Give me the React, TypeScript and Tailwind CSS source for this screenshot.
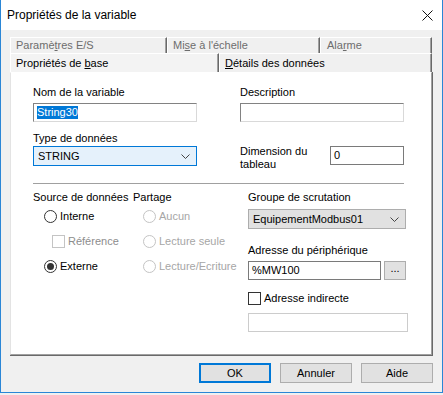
import React from "react";

function Radio({ checked = false, disabled = false }: { checked?: boolean; disabled?: boolean }) {
  return (
    <span
      className={`flex h-[13px] w-[13px] shrink-0 items-center justify-center rounded-full border bg-white ${
        disabled ? "border-[#c4c4c4]" : "border-[#333333]"
      }`}
    >
      {checked && <span className="h-[7px] w-[7px] rounded-full bg-[#333333]" />}
    </span>
  );
}

function Check({ disabled = false }: { disabled?: boolean }) {
  return (
    <span
      className={`h-[13px] w-[13px] shrink-0 border bg-white ${
        disabled ? "border-[#c4c4c4]" : "border-[#333333]"
      }`}
    />
  );
}

function Chevron() {
  return (
    <svg width="9" height="5" viewBox="0 0 9 5" className="shrink-0">
      <path d="M0.5 0.5 L4.5 4.5 L8.5 0.5" fill="none" stroke="#444" strokeWidth="1" />
    </svg>
  );
}

export default function App() {
  return (
    <div className="h-[395px] w-[443px] bg-[#f0f0f0] font-['Liberation_Sans',Arial,sans-serif] text-[11px] leading-[13px] text-black">
      <div className="flex h-[393px] w-[443px] flex-col border-x border-b border-[#2a86d6] bg-[#f0f0f0]">
        {/* Title bar */}
        <div className="flex h-[30px] shrink-0 items-center justify-between bg-white pl-[6px] pr-[9px]">
          <span className="text-[12px]">Propriétés de la variable</span>
          <svg width="11" height="11" viewBox="0 0 11 11">
            <path d="M0.5 0.5 L10.5 10.5 M10.5 0.5 L0.5 10.5" stroke="#111" strokeWidth="1" />
          </svg>
        </div>

        <div className="flex flex-col px-[9px] pt-[7px]">
          {/* Back tab row */}
          <div className="flex h-[16px] w-[422px] text-[#6d6d6d]">
            <div className="flex w-[157px] items-center border-l border-t border-l-white border-t-white border-r border-r-[#696969] pl-[5px] shadow-[inset_-1px_0_0_#a0a0a0]">
              <span>
                Paramè<span className="underline">t</span>res E/S
              </span>
            </div>
            <div className="flex w-[153px] items-center border-l border-t border-l-white border-t-white border-r border-r-[#696969] pl-[5px] shadow-[inset_-1px_0_0_#a0a0a0]">
              <span>
                Mi<span className="underline">s</span>e à l'échelle
              </span>
            </div>
            <div className="flex w-[112px] items-center border-l border-t border-l-white border-t-white border-r border-r-[#696969] pl-[6px] shadow-[inset_-1px_0_0_#a0a0a0]">
              <span>
                Ala<span className="underline">r</span>me
              </span>
            </div>
          </div>
          {/* Front tab row */}
          <div className="flex h-[19px] w-[422px]">
            <div className="flex w-[209px] items-center border-l border-t border-l-white border-t-white border-r border-r-[#696969] bg-[#f3f3f3] pl-[5px] shadow-[inset_-1px_0_0_#a0a0a0]">
              <span>
                Propriétés de <span className="underline">b</span>ase
              </span>
            </div>
            <div className="flex w-[213px] items-center border-l border-t border-l-white border-t-white border-r border-r-[#696969] pl-[5px] shadow-[inset_-1px_0_0_#a0a0a0]">
              <span>
                <span className="underline">D</span>étails des données
              </span>
            </div>
          </div>

          {/* Panel */}
          <div className="h-[284px] w-[423px] border-b border-r border-b-[#696969] border-r-[#696969]">
            <div className="h-full w-full border-l border-t border-b border-r border-l-[#e3e3e3] border-t-white border-b-[#a0a0a0] border-r-[#a0a0a0] bg-white pl-[22px] pt-[13px]">
              {/* Top section */}
              <div className="flex">
                <div className="w-[164px]">
                  <div>Nom de la variable</div>
                  <div className="mt-[4px] flex h-[19px] items-center border-l border-t border-r border-b border-l-[#828282] border-t-[#828282] border-r-[#d9d9d9] border-b-[#d9d9d9] pl-[3px]">
                    <span className="bg-[#0078d7] text-white">String30</span>
                  </div>
                  <div className="mt-[10px]">Type de données</div>
                  <div className="mt-[1px] flex h-[20px] items-center justify-between border border-[#0078d7] bg-[#e5f1fb] pl-[4px] pr-[6px]">
                    <span>STRING</span>
                    <Chevron />
                  </div>
                </div>
                <div className="ml-[43px] w-[164px]">
                  <div>Description</div>
                  <div className="mt-[4px] h-[19px] border-l border-t border-r border-b border-l-[#828282] border-t-[#828282] border-r-[#d9d9d9] border-b-[#d9d9d9]" />
                  <div className="mt-[23px] flex">
                    <div className="w-[90px]">
                      Dimension du
                      <br />
                      tableau
                    </div>
                    <div className="mt-[1px] flex h-[19px] w-[74px] items-center border border-[#7a7a7a] pl-[3px]">0</div>
                  </div>
                </div>
              </div>

              {/* Separator */}
              <div className="mt-[12px] h-px w-[371px] bg-[#a0a0a0]" />

              {/* Bottom section */}
              <div className="mt-[7px] flex">
                <div className="w-[100px]">
                  <div>Source de données</div>
                  <div className="flex h-[25px] items-center pl-[11px]">
                    <Radio />
                    <span className="ml-[3px]">Interne</span>
                  </div>
                  <div className="flex h-[25px] items-center pl-[19px] text-[#8d8d8d]">
                    <Check disabled />
                    <span className="ml-[3px]">Référence</span>
                  </div>
                  <div className="flex h-[25px] items-center pl-[11px]">
                    <Radio checked />
                    <span className="ml-[3px]">Externe</span>
                  </div>
                </div>
                <div className="w-[115px]">
                  <div>Partage</div>
                  <div className="flex h-[25px] items-center pl-[10px] text-[#a6a6a6]">
                    <Radio disabled />
                    <span className="ml-[3px]">Aucun</span>
                  </div>
                  <div className="flex h-[25px] items-center pl-[10px] text-[#a6a6a6]">
                    <Radio disabled />
                    <span className="ml-[3px]">Lecture seule</span>
                  </div>
                  <div className="flex h-[25px] items-center pl-[10px] text-[#a6a6a6]">
                    <Radio disabled />
                    <span className="ml-[3px]">Lecture/Ecriture</span>
                  </div>
                </div>
                <div className="w-[160px]">
                  <div>Groupe de scrutation</div>
                  <div className="mt-[5px] flex h-[20px] w-[158px] items-center justify-between border border-[#adadad] bg-[#e1e1e1] pl-[4px] pr-[6px]">
                    <span>EquipementModbus01</span>
                    <Chevron />
                  </div>
                  <div className="mt-[15px]">Adresse du périphérique</div>
                  <div className="mt-[4px] flex h-[19px] gap-[3px]">
                    <div className="flex w-[133px] items-center border border-[#7a7a7a] pl-[3px]">%MW100</div>
                    <div className="flex h-[19px] w-[22px] items-start justify-center border border-[#adadad] bg-[#e1e1e1] leading-[12px]">
                      ...
                    </div>
                  </div>
                  <div className="mt-[12px] flex items-center">
                    <Check />
                    <span className="ml-[3px]">Adresse indirecte</span>
                  </div>
                  <div className="mt-[8px] h-[19px] w-[160px] border border-[#cccccc]" />
                </div>
              </div>
            </div>
          </div>

          {/* Buttons */}
          <div className="mt-[7px] flex justify-end gap-[9px]">
            <div className="flex h-[20px] w-[72px] items-center justify-center border-2 border-[#0078d7] bg-[#e1e1e1]">OK</div>
            <div className="flex h-[20px] w-[72px] items-center justify-center border border-[#adadad] bg-[#e1e1e1]">Annuler</div>
            <div className="flex h-[20px] w-[72px] items-center justify-center border border-[#adadad] bg-[#e1e1e1]">Aide</div>
          </div>
        </div>
      </div>
    </div>
  );
}
